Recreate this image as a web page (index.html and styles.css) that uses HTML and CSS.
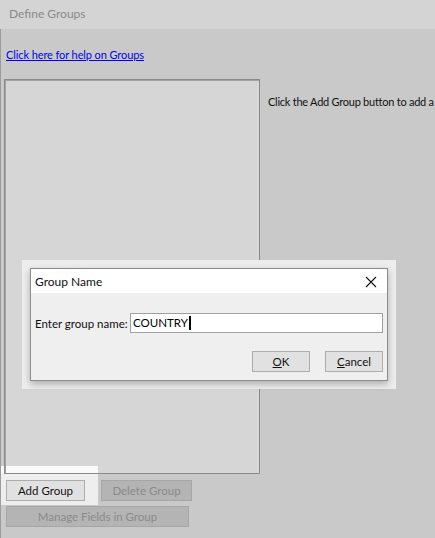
FILE: index.html
```html
<!DOCTYPE html>
<html>
<head>
<meta charset="utf-8">
<link rel="stylesheet" href="styles.css">
</head>
<body>
<div class="window">
  <div class="titlebar">Define Groups</div>
  <div class="main">
    <a class="help" href="#">Click here for help on Groups</a>
    <div class="content">
      <div class="listbox"></div>
      <div class="hint">Click the Add Group button to add a</div>
    </div>
    <div class="glow"></div>
    <div class="actions">
      <div class="row">
        <button class="btn">Add Group</button>
        <button class="btn disabled del">Delete Group</button>
      </div>
      <button class="btn disabled manage">Manage Fields in Group</button>
    </div>
  </div>

  <div class="dlg-frame">
    <div class="dialog">
      <div class="dlg-title">
        <span>Group Name</span>
        <svg class="close" width="12" height="12" viewBox="0 0 12 12"><path d="M1 1L11 11M11 1L1 11" stroke="#111" stroke-width="1.1" fill="none"/></svg>
      </div>
      <div class="dlg-body">
        <div class="field">
          <label>Enter group name:</label>
          <div class="input">COUNTRY<span class="caret"></span></div>
        </div>
        <div class="dlg-buttons">
          <button class="btn dbtn"><u>O</u>K</button>
          <button class="btn dbtn"><u>C</u>ancel</button>
        </div>
      </div>
    </div>
  </div>
</div>
</body>
</html>
```

FILE: styles.css
```css
* { box-sizing: border-box; }
html, body { margin: 0; padding: 0; }
body {
  width: 435px;
  height: 538px;
  overflow: hidden;
  font-family: Lato, "Liberation Sans", sans-serif;
  font-size: 11.5px;
  background: #c9c9c9;
}
.window { position: relative; width: 435px; height: 538px; overflow: hidden; }
.titlebar {
  height: 29px;
  line-height: 28px;
  padding-left: 9px;
  background: #d4d4d4;
  color: #8a8a8a;
  font-size: 12px;
}
.main {
  position: relative;
  height: 509px;
  background: #c9c9c9;
  border-left: 1px solid #9c9c9c;
  padding-top: 18px;
}
.help {
  display: inline-block;
  margin-left: 5px;
  color: #0000ee;
  text-decoration: underline;
  line-height: 16px;
  height: 16px;
  font-size: 11px;
  letter-spacing: -0.1px;
}
.content {
  display: flex;
  margin-top: 16px;
  margin-left: 3px;
}
.listbox {
  position: relative;
  flex: 0 0 256px;
  width: 256px;
  height: 395px;
  background: #d6d6d6;
}
.listbox::after {
  content: "";
  position: absolute;
  inset: 0;
  border: 1px solid #8a8a8a;
  box-shadow: inset 1px 1px 0 #a2a2a2;
  z-index: 2;
}
.hint {
  margin-left: 8px;
  margin-top: 15px;
  white-space: nowrap;
  color: #111;
  line-height: 16px;
  font-size: 11px;
  letter-spacing: -0.25px;
}
.glow {
  position: absolute;
  left: 0;
  top: 437px;
  width: 97px;
  height: 39px;
  background: linear-gradient(#fafafa 0 7px, #eeeeee 7px 100%);
  z-index: 1;
}
.actions {
  position: relative;
  z-index: 3;
  margin-top: 6px;
  margin-left: 5px;
  display: flex;
  flex-direction: column;
  gap: 5px;
}
.row { display: flex; gap: 16px; }
.btn {
  font-family: inherit;
  font-size: 11.5px;
  height: 21px;
  padding: 0;
  background: #e1e1e1;
  border: 1px solid #adadad;
  color: #111;
  line-height: 18px;
}
.row .btn:first-child { width: 79px; }
.del { width: 91px; }
.manage { width: 183px; }
.disabled {
  background: #b4b4b4;
  border-color: #a6a6a6;
  color: #8a8a8a;
}
.dlg-frame {
  position: absolute;
  left: 22px;
  top: 260px;
  width: 374px;
  height: 129px;
  background: #ededed;
  padding: 8px 0 0 8px;
  z-index: 5;
}
.dialog {
  width: 358px;
  height: 113px;
  border: 1px solid #8c8c8c;
  background: #efefef;
  box-shadow: 0 3px 7px rgba(0,0,0,0.28);
}
.dlg-title {
  height: 24px;
  background: #ffffff;
  display: flex;
  align-items: center;
  justify-content: space-between;
  padding: 0 10px 0 4px;
  color: #111;
  font-size: 12px;
}
.close { margin-top: 1px; }
.dlg-body { padding: 20px 4px 0 4px; }
.field {
  display: flex;
  align-items: center;
}
.field label { width: 95px; flex: 0 0 95px; white-space: nowrap; color: #111; }
.input {
  width: 254px;
  height: 20px;
  background: #fff;
  border: 1px solid #a0a0a0;
  padding-left: 2px;
  line-height: 18px;
  color: #000;
  display: flex;
  align-items: center;
}
.caret {
  display: inline-block;
  width: 2px;
  height: 14px;
  background: #000;
  margin-left: 1px;
}
.dlg-buttons {
  display: flex;
  justify-content: flex-end;
  gap: 15px;
  margin-top: 18px;
}
.dbtn { width: 58px; }
```
